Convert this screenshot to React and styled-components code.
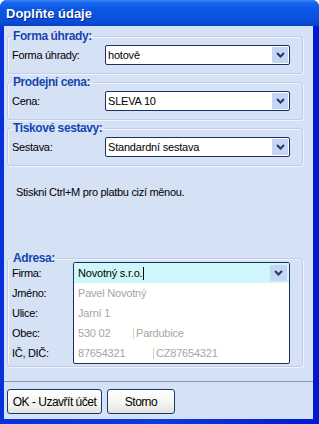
import React from "react"
import styled, { createGlobalStyle } from "styled-components"

const GlobalStyle = createGlobalStyle`
  html, body {
    margin: 0;
    padding: 0;
    background: #ffffff;
  }
  body {
    font-family: "Liberation Sans", Arial, sans-serif;
    font-size: 11px;
    color: #000;
  }
`

const Window = styled.div`
  width: 319px;
  height: 424px;
  box-sizing: border-box;
  display: flex;
  flex-direction: column;
  background: linear-gradient(90deg, #0831d9 0%, #0a3be0 50%, #0019cf 100%);
  border-radius: 7px 7px 0 0;
  overflow: hidden;
`

const TitleBar = styled.div`
  flex: none;
  height: 26px;
  display: flex;
  align-items: center;
  padding-left: 6px;
  background: linear-gradient(
    180deg,
    #3d8cf7 0%,
    #1a68ee 10%,
    #0b57e6 35%,
    #0a50dd 75%,
    #0843c9 100%
  );
  color: #ffffff;
  font-weight: bold;
  font-size: 13px;
  text-shadow: 1px 1px 0 #0a1f82;
`

const Frame = styled.div`
  flex: 1;
  display: flex;
  flex-direction: column;
  margin: 0 6px 5px 4px;
  background: #d5e1f5;
`

const Body = styled.div`
  display: flex;
  flex-direction: column;
  padding: 3px 10px 0 3px;
`

const Group = styled.fieldset`
  margin: ${p => p.$top || 0}px 0 0 0;
  padding: 2px 12px ${p => (p.$bottom !== undefined ? p.$bottom : 8)}px 4px;
  border: 1px solid #bfcde8;
  border-radius: 3px;
  box-shadow: 1px 1px 0 #eef3fc, inset 1px 1px 0 #eef3fc;
  min-width: 0;
`

const Legend = styled.legend`
  margin-left: -1px;
  padding: 0 2px;
  font-weight: bold;
  font-size: 12px;
  line-height: 14px;
  letter-spacing: -0.4px;
  color: #1746b0;
`

const Row = styled.div`
  display: grid;
  grid-template-columns: 93px 1fr;
  align-items: center;
`

const Label = styled.span`
  letter-spacing: -0.3px;
`

const Combo = styled.div`
  height: 20px;
  box-sizing: border-box;
  display: flex;
  align-items: center;
  padding-left: 2px;
  border: 1px solid #1f2e63;
  border-radius: 2px;
  background: #ffffff;
  letter-spacing: -0.2px;
`

const DropButton = styled.span`
  margin-left: auto;
  margin-right: ${p => p.$right || 1}px;
  width: ${p => p.$width || 16}px;
  height: 16px;
  flex: none;
  display: flex;
  align-items: center;
  justify-content: center;
  background: #c6d5f3;
  border-radius: 1px;
`

const Chevron = () => (
  <svg width="9" height="6" viewBox="0 0 9 6">
    <path d="M1 1 L4.5 4.5 L8 1" fill="none" stroke="#22366e" strokeWidth="2" />
  </svg>
)

const Hint = styled.p`
  margin: 19px 0 0 9px;
  line-height: 14px;
  letter-spacing: -0.3px;
`

const AddressGrid = styled.div`
  display: grid;
  grid-template-columns: 61px 1fr;
  margin-top: -5px;
`

const LabelColumn = styled.div`
  display: flex;
  flex-direction: column;
  padding-top: 1px;
`

const AddrLabel = styled.span`
  height: 20px;
  line-height: 20px;
  letter-spacing: -0.3px;
`

const AddressBox = styled.div`
  border: 1px solid #1f2e63;
  border-radius: 2px;
  background: #fffffd;
  display: flex;
  flex-direction: column;
`

const AddrRow = styled.div`
  height: 20px;
  display: flex;
  align-items: center;
  padding-left: 4px;
  color: #a6a6a6;
  letter-spacing: -0.2px;
  background: ${p => (p.$active ? "#cdf7fb" : "transparent")};
`

const ActiveText = styled.span`
  color: #000;
`

const Caret = styled.span`
  width: 1px;
  height: 13px;
  margin-left: 1px;
  background: #000;
`

const Cell = styled.span`
  width: ${p => p.$width}px;
  flex: none;
`

const CellDivider = styled.span`
  width: 1px;
  height: 11px;
  margin-right: 2px;
  background: #d4d4d4;
`

const Footer = styled.div`
  margin-top: auto;
  border-top: 1px solid #8399c4;
  padding: 7px 0 5px 3px;
  display: flex;
  gap: 5px;
`

const Button = styled.button`
  width: ${p => p.$width}px;
  height: 25px;
  padding: 0;
  border: 1px solid #1b3870;
  border-radius: 3px;
  background: linear-gradient(180deg, #ffffff 0%, #f4f4f2 60%, #e3e2dc 100%);
  font-family: "Liberation Sans", Arial, sans-serif;
  font-size: 12px;
  letter-spacing: -0.5px;
  color: #000;
`

const App = () => (
  <>
    <GlobalStyle />
    <Window>
      <TitleBar>Doplňte údaje</TitleBar>
      <Frame>
        <Body>
          <Group $bottom={8}>
            <Legend>Forma úhrady:</Legend>
            <Row>
              <Label>Forma úhrady:</Label>
              <Combo>
                hotově
                <DropButton><Chevron /></DropButton>
              </Combo>
            </Row>
          </Group>
          <Group $top={1}>
            <Legend>Prodejní cena:</Legend>
            <Row>
              <Label>Cena:</Label>
              <Combo>
                SLEVA 10
                <DropButton><Chevron /></DropButton>
              </Combo>
            </Row>
          </Group>
          <Group $top={1}>
            <Legend>Tiskové sestavy:</Legend>
            <Row>
              <Label>Sestava:</Label>
              <Combo>
                Standardní sestava
                <DropButton><Chevron /></DropButton>
              </Combo>
            </Row>
          </Group>

          <Hint>Stiskni Ctrl+M pro platbu cizí měnou.</Hint>

          <Group $top={52} $bottom={2}>
            <Legend>Adresa:</Legend>
            <AddressGrid>
              <LabelColumn>
                <AddrLabel>Firma:</AddrLabel>
                <AddrLabel>Jméno:</AddrLabel>
                <AddrLabel>Ulice:</AddrLabel>
                <AddrLabel>Obec:</AddrLabel>
                <AddrLabel>IČ, DIČ:</AddrLabel>
              </LabelColumn>
              <AddressBox>
                <AddrRow $active>
                  <ActiveText>Novotný s.r.o.</ActiveText>
                  <Caret />
                  <DropButton $width={17} $right={2}><Chevron /></DropButton>
                </AddrRow>
                <AddrRow>Pavel Novotný</AddrRow>
                <AddrRow>Jarní 1</AddrRow>
                <AddrRow>
                  <Cell $width={55}>530 02</Cell>
                  <CellDivider />
                  Pardubice
                </AddrRow>
                <AddrRow>
                  <Cell $width={75}>87654321</Cell>
                  <CellDivider />
                  CZ87654321
                </AddrRow>
              </AddressBox>
            </AddressGrid>
          </Group>
        </Body>
        <Footer>
          <Button $width={95}>OK - Uzavřít účet</Button>
          <Button $width={68}>Storno</Button>
        </Footer>
      </Frame>
    </Window>
  </>
)

export default App
